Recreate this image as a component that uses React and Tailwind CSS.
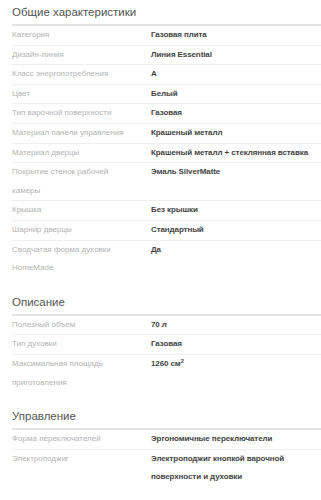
const sections = [
  {
    title: "Общие характеристики",
    rows: [
      ["Категория", "Газовая плита"],
      ["Дизайн-линия", "Линия Essential"],
      ["Класс энергопотребления", "A"],
      ["Цвет", "Белый"],
      ["Тип варочной поверхности", "Газовая"],
      ["Материал панели управления", "Крашеный металл"],
      ["Материал дверцы", "Крашеный металл + стеклянная вставка"],
      ["Покрытие стенок рабочей камеры", "Эмаль SilverMatte"],
      ["Крышка", "Без крышки"],
      ["Шарнир дверцы", "Стандартный"],
      ["Сводчатая форма духовки HomeMade", "Да"],
    ],
  },
  {
    title: "Описание",
    rows: [
      ["Полезный объем", "70 л"],
      ["Тип духовки", "Газовая"],
      ["Максимальная площадь приготовления", <>1260 см<sup className="text-[5.5px]">2</sup></>],
    ],
  },
  {
    title: "Управление",
    rows: [
      ["Форма переключателей", "Эргономичные переключатели"],
      ["Электроподжиг", "Электроподжиг кнопкой варочной поверхности и духовки"],
    ],
  },
];

function Section({ title, rows }) {
  return (
    <section className="mb-3">
      <h2 className="h-6 flex items-center text-[11.5px] text-[#555] pt-px">{title}</h2>
      <div className="border-t-2 border-[#e3e3e3]">
        {rows.map(([label, value], i) => (
          <div
            key={i}
            className={`flex text-[8px] leading-[18.6px] ${i < rows.length - 1 ? "border-b border-[#efefef]" : ""}`}
          >
            <div className="w-[139px] shrink-0 pr-[20px] text-[#b3b3b3]">{label}</div>
            <div className="flex-1 font-bold tracking-[-0.1px] text-[#444]">{value}</div>
          </div>
        ))}
      </div>
    </section>
  );
}

export default function App() {
  return (
    <div className="w-[321px] min-h-[500px] bg-white pl-3 font-['Liberation_Sans',Arial,sans-serif]">
      {sections.map((s) => (
        <Section key={s.title} {...s} />
      ))}
    </div>
  );
}
